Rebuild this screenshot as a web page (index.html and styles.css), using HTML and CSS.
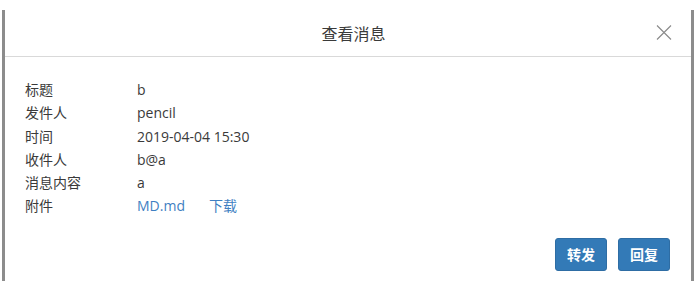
FILE: index.html
```html
<!DOCTYPE html>
<html lang="zh">
<head>
<meta charset="utf-8">
<title>查看消息</title>
<link rel="stylesheet" href="styles.css">
</head>
<body>
<div class="modal">
  <div class="modal-header">
    <h4 class="modal-title">查看消息</h4>
    <button class="close" aria-label="关闭">
      <svg width="16" height="15" viewBox="0 0 16 15"><path d="M1 0.5 L15 14.5 M15 0.5 L1 14.5" stroke="#8a8a8a" stroke-width="1.1" fill="none"/></svg>
    </button>
  </div>
  <div class="modal-body">
    <div class="row"><span class="label">标题</span><span class="value">b</span></div>
    <div class="row"><span class="label">发件人</span><span class="value">pencil</span></div>
    <div class="row"><span class="label">时间</span><span class="value">2019-04-04 15:30</span></div>
    <div class="row"><span class="label">收件人</span><span class="value">b@a</span></div>
    <div class="row"><span class="label">消息内容</span><span class="value">a</span></div>
    <div class="row"><span class="label">附件</span><span class="value"><a class="link" href="#">MD.md</a><a class="link dl" href="#">下载</a></span></div>
  </div>
  <div class="modal-footer">
    <button class="btn">转发</button>
    <button class="btn">回复</button>
  </div>
</div>
</body>
</html>
```
FILE: styles.css
```css
html, body {
  margin: 0;
  padding: 0;
  background: #fff;
}
body {
  font-family: "Open Sans", "Noto Sans CJK SC", sans-serif;
  font-size: 14px;
  color: #3a3a3a;
}
.modal {
  margin: 10px 0 0 2px;
  width: 686px;
  height: 271px;
  border-left: 3px solid #8c8c8c;
  border-right: 3px solid #8c8c8c;
  box-sizing: content-box;
  display: flex;
  flex-direction: column;
}
.modal-header {
  height: 46px;
  border-bottom: 1px solid #d9d9d9;
  display: flex;
  align-items: center;
  justify-content: center;
  position: relative;
}
.modal-title {
  margin: 0;
  padding-left: 11px;
  font-size: 16px;
  font-weight: normal;
  color: #3a3a3a;
}
.close {
  position: absolute;
  right: 19px;
  top: 15px;
  padding: 0;
  border: 0;
  background: none;
  width: 16px;
  height: 15px;
  display: flex;
}
.modal-body {
  padding: 21px 0 0 20px;
  display: flex;
  flex-direction: column;
}
.row {
  display: flex;
  height: 23.3px;
  line-height: 23.3px;
}
.label {
  width: 112px;
}
.link {
  color: #3f7fc2;
  text-decoration: none;
}
.dl {
  margin-left: 24px;
}
.modal-footer {
  display: flex;
  justify-content: flex-end;
  gap: 11px;
  padding: 20px 21px 0 0;
}
.btn {
  font-family: "Open Sans", "Noto Sans CJK SC", sans-serif;
  font-size: 14px;
  font-weight: bold;
  color: #fff;
  background: #337ab7;
  border: 1px solid #2e6da4;
  border-radius: 3px;
  width: 52px;
  height: 33px;
  padding: 0;
}
```
